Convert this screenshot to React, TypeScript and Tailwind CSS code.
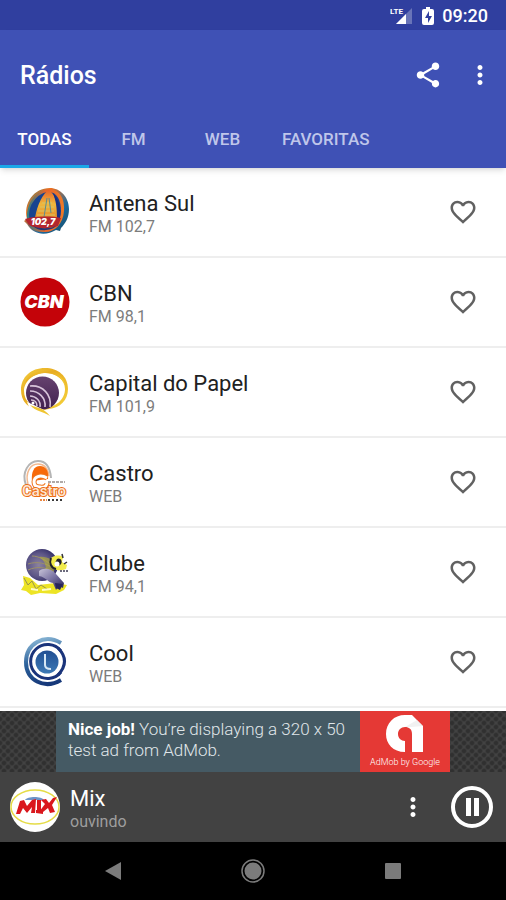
import { useState } from 'react';
import type { ReactNode } from 'react';
import { MdFavorite, MdFavoriteBorder, MdMoreVert, MdShare } from 'react-icons/md';

const tabs = ['TODAS', 'FM', 'WEB', 'FAVORITAS'];

function AntenaLogo() {
  return (
    <svg viewBox="0 0 50 50" className="size-[50px]" aria-hidden="true">
      <defs>
        <linearGradient id="antena-ring" x1="0" y1="0" x2="1" y2="1">
          <stop offset="0" stopColor="#2f8a80" />
          <stop offset="0.3" stopColor="#f0701c" />
          <stop offset="0.65" stopColor="#1c6aa0" />
          <stop offset="1" stopColor="#164a62" />
        </linearGradient>
        <linearGradient id="antena-edge" x1="0" y1="0" x2="1" y2="0">
          <stop offset="0" stopColor="#2a7f86" />
          <stop offset="0.5" stopColor="#e7662b" />
          <stop offset="1" stopColor="#ee7a26" />
        </linearGradient>
        <linearGradient id="antena-sail" x1="0" y1="0" x2="0" y2="1">
          <stop offset="0" stopColor="#e8622a" />
          <stop offset="0.5" stopColor="#f0b73c" />
          <stop offset="1" stopColor="#e58e2a" />
        </linearGradient>
      </defs>
      <path d="M30 1C40 1 49 10 49 22c0 9-4 15-8 19l-1 3-4-1c-10 6-23 5-29-6l-3-3 3-2C3 16 14 1 30 1z" fill="url(#antena-ring)" />
      <path d="M30 2c10 1 15 10 14 22-1 13-9 21-19 21C13 46 7 39 7 30 7 15 17 2 30 2z" fill="url(#antena-edge)" />
      <path d="M29 5c8 0 12 9 12 19S34 41 25 41 9 37 9 28C9 16 19 5 29 5z" fill="#18438f" />
      <path d="M29 3c-6 3-12 15-14 28h24c0-10-3-23-10-28z" fill="url(#antena-sail)" />
      <path d="M33 6c6 6 8 16 7 25h-3c0-10-1-17-4-25z" fill="#172f83" />
      <path d="M22 16h10M20 20h14M18 24h16M17 28h18" stroke="#d8c465" strokeWidth="1" />
      <path d="M27 11l-3 19M29 11l2 15" stroke="#5c8c92" strokeWidth="1" />
      <path d="M5 32c10-3 26-3 36-1l-3 8c-10 3-23 3-29-1z" fill="#b3262e" />
      <path d="M13 39c6 3 17 3 23 0-4 5-18 6-23 0z" fill="#253573" />
      <text x="23" y="38" textAnchor="middle" fontFamily="Inter, sans-serif" fontSize="9" fontWeight="900" fontStyle="italic" fill="#fff">102,7</text>
    </svg>
  );
}

function CbnLogo() {
  return (
    <svg viewBox="0 0 50 50" className="size-[50px]" aria-hidden="true">
      <circle cx="25" cy="25" r="24.5" fill="#c40309" />
      <text x="24" y="31" textAnchor="middle" fontFamily="Inter, sans-serif" fontSize="18" fontWeight="900" fontStyle="italic" fill="#fff">CBN</text>
    </svg>
  );
}

function CapitalLogo() {
  return (
    <svg viewBox="0 0 50 50" className="size-[50px]" aria-hidden="true">
      <defs>
        <linearGradient id="capital-gold" x1="0" y1="0" x2="1" y2="1">
          <stop offset="0" stopColor="#f3cf3f" />
          <stop offset="0.4" stopColor="#e8ac22" />
          <stop offset="1" stopColor="#f6d43d" />
        </linearGradient>
        <linearGradient id="capital-ball" x1="0" y1="0" x2="0" y2="1">
          <stop offset="0" stopColor="#66426f" />
          <stop offset="1" stopColor="#41204f" />
        </linearGradient>
      </defs>
      <path d="M25 1C38 1 48 9 48 22c0 11-8 19-19 20C11 46 1 36 1 23 1 10 11 1 25 1zM26 6C14 6 4 14 4 24c0 10 8 17 18 17 13 0 23-8 23-19C45 13 37 6 26 6z" fill="url(#capital-gold)" fillRule="evenodd" />
      <path d="M22 3c11-1 21 4 23 15C41 10 34 6 25 6 16 6 9 10 5 17 7 8 14 4 22 3z" fill="url(#capital-gold)" />
      <circle cx="22.500" cy="26" r="16.500" fill="url(#capital-ball)" />
      <g fill="none" stroke="#d8c4da" strokeWidth="1.600">
        <path d="M10 19c13-1 22 9 20 21" />
        <path d="M10 24c9 0 16 7 15 16" />
        <path d="M10 29c6 0 11 5 10 11" />
        <path d="M11 33c4 0 6 3 6 6" />
      </g>
      <path d="M7 35l7 3 14 7 2 3-11-3-10-5z" fill="#fff" />
      <path d="M10 38c7 3 13 2 20 11-7-5-14-4-20-11z" fill="#efc532" />
      <circle cx="13" cy="36" r="1.500" fill="#fff" />
    </svg>
  );
}

function CastroLogo() {
  return (
    <svg viewBox="0 0 50 50" className="size-[50px]" aria-hidden="true">
      <path d="M6 28C1 15 9 4 18 4c7 0 12 5 13 17" fill="none" stroke="#b5b5b5" strokeWidth="2" />
      <path d="M8 27C5 16 10 7 18 7c7 0 10 5 11 12" fill="none" stroke="#f3b98f" strokeWidth="1.500" />
      <path d="M12 24c-1-9 2-15 8-15s9 5 8 13z" fill="#f76a0a" />
      <path d="M27 21c-7-4-13-1-13 4 0 3 2 5 6 5 4 1 7-1 7-4" fill="none" stroke="#f0761e" strokeWidth="5" />
      <path d="M27 21c-7-4-13-1-13 4 0 3 2 5 6 5 4 1 7-1 7-4" fill="none" stroke="#fff" strokeWidth="3" />
      <path d="M28 25h17" stroke="#b0aaa8" strokeWidth="2" strokeDasharray="3 1" />
      <text x="24" y="39" textAnchor="middle" fontFamily="Roboto, sans-serif" fontSize="15" fontWeight="500" fill="#fde6d4" stroke="#ec6d14" strokeWidth="2" paintOrder="stroke">Castro</text>
      <path d="M20 43h7" stroke="#e88643" strokeWidth="2" strokeDasharray="2 1" />
      <path d="M28 43h14" stroke="#3a3a3a" strokeWidth="2" strokeDasharray="2 2" />
    </svg>
  );
}

function ClubeLogo() {
  return (
    <svg viewBox="0 0 50 50" className="size-[50px]" aria-hidden="true">
      <defs>
        <radialGradient id="clube-ball" cx="0.4" cy="0.5" r="0.6">
          <stop offset="0" stopColor="#8b82a0" />
          <stop offset="0.6" stopColor="#5e5788" />
          <stop offset="1" stopColor="#302b65" />
        </radialGradient>
        <linearGradient id="clube-arm" x1="0" y1="0" x2="1" y2="1">
          <stop offset="0" stopColor="#c7c3d8" />
          <stop offset="0.5" stopColor="#7770a0" />
          <stop offset="1" stopColor="#242052" />
        </linearGradient>
      </defs>
      <path d="M3 29l7 2 8 7 18-2 11 2-3 5-8 4-16-1-9 2-5-4-5-1 3-5z" fill="#ede425" />
      <path d="M4 31l4 7 4-4 4 8 5-4 6 4" fill="none" stroke="#98944f" strokeWidth="1" />
      <circle cx="22" cy="18" r="16" fill="url(#clube-ball)" />
      <path d="M8 17c9-3 18-1 27 5M8 23c9-4 18-3 26 2M12 9c6 0 15 4 21 11" stroke="#9b9068" strokeWidth="1" fill="none" />
      <path d="M19 10c8-1 15 3 17 8l-3 8-8-1c2-6 0-11-6-15z" fill="#b9b336" opacity="0.6" />
      <path d="M29 15c1-6 9-8 14-5l-1 5 5 3-1 4c-7 3-15 1-17-7z" fill="#f2ec4c" />
      <path d="M31 11c-2 5 0 10 5 11" fill="none" stroke="#22212a" strokeWidth="2" />
      <path d="M37 12c3-2 6 2 4 5s-6 2-6-1z" fill="#22212a" />
      <circle cx="37" cy="17" r="2.500" fill="#fff" />
      <path d="M42 7l1 4M47 15l-3 2" stroke="#343339" strokeWidth="1.500" />
      <path d="M40 24h8" stroke="#3c3a54" strokeWidth="1.500" strokeDasharray="2 1" />
      <path d="M19 24c5-4 13-2 17 3l8 9-1 5-4-2-3 4-3-7c-6-1-7-6-14-7z" fill="url(#clube-arm)" />
      <path d="M35 36l8 1-3 6-4-2z" fill="#28255a" />
      <path d="M11 42l7 1M22 43l9-1" stroke="#fffdc8" strokeWidth="2" />
    </svg>
  );
}

function CoolLogo() {
  return (
    <svg viewBox="0 0 50 50" className="size-[50px]" aria-hidden="true">
      <defs>
        <linearGradient id="cool-outer" x1="0.3" y1="0" x2="0.5" y2="1">
          <stop offset="0" stopColor="#85b2d2" />
          <stop offset="0.5" stopColor="#2b619b" />
          <stop offset="1" stopColor="#17397a" />
        </linearGradient>
        <linearGradient id="cool-center" x1="0" y1="0" x2="0" y2="1">
          <stop offset="0" stopColor="#214f93" />
          <stop offset="1" stopColor="#3d79b5" />
        </linearGradient>
      </defs>
      <path d="M41 6C24-4 6 7 6 25s18 28 35 18" fill="none" stroke="url(#cool-outer)" strokeWidth="4" />
      <path d="M41 14a17 17 0 1 0 0 21" fill="none" stroke="#1b347b" strokeWidth="3" />
      <path d="M38 11q13 13 0 27" fill="none" stroke="#1b347b" strokeWidth="3" />
      <circle cx="27" cy="25" r="11.500" fill="url(#cool-center)" />
      <path d="M25 17v11c0 3 2 4 6 4" fill="none" stroke="#d6e7f5" strokeWidth="2" />
    </svg>
  );
}

function MixLogo() {
  return (
    <svg viewBox="0 0 50 50" className="size-[50px]" aria-hidden="true">
      <circle cx="25" cy="25" r="25" fill="#fff" />
      <ellipse cx="25" cy="25" rx="24" ry="17" fill="none" stroke="#e5dc46" strokeWidth="1.500" />
      <path d="M15 18c2-4 17-4 19 0z" fill="#6d93c9" />
      <path d="M6 32l4-13 4-1 3 6 5-6 4-1-1 14h-4l1-6-5 6-4-5-3 6z" fill="#da171d" />
      <path d="M27 18h4v10l2 1v3l-7-1v-3h1z" fill="#da171d" />
      <path d="M31 18l5-1 3 4 4-5 4-1-5 8 3 7-5 1-2-5-5 4h-4l6-8z" fill="#da171d" />
    </svg>
  );
}

const stations: { name: string; band: string; logo: ReactNode }[] = [
  { name: 'Antena Sul', band: 'FM 102,7', logo: <AntenaLogo /> },
  { name: 'CBN', band: 'FM 98,1', logo: <CbnLogo /> },
  { name: 'Capital do Papel', band: 'FM 101,9', logo: <CapitalLogo /> },
  { name: 'Castro', band: 'WEB', logo: <CastroLogo /> },
  { name: 'Clube', band: 'FM 94,1', logo: <ClubeLogo /> },
  { name: 'Cool', band: 'WEB', logo: <CoolLogo /> },
];

function StatusBar() {
  return (
    <div className="flex h-[30px] items-center justify-end gap-2 bg-[#303f9f] pr-[18px] pt-px text-white">
      <svg viewBox="0 0 24 20" className="h-5 w-6" aria-label="LTE">
        <path d="M22 2v16H6z" fill="#6974b8" />
        <path d="M16 8v10H6z" fill="#fff" />
        <path d="M0 0h13v9H0z" fill="#303f9f" />
        <text x="0" y="8" fontFamily="Roboto, sans-serif" fontSize="8" fontWeight="700" fill="#fff">LTE</text>
      </svg>
      <svg viewBox="0 0 12 20" className="h-5 w-3" aria-label="Bateria">
        <path d="M4 1h4v2h2q2 0 2 2v12q0 2-2 2H2q-2 0-2-2V5q0-2 2-2h2z" fill="#fff" />
        <path d="M7 5l-4 7h3v5l4-7H7z" fill="#303f9f" />
      </svg>
      <span className="text-lg font-medium leading-5">09:20</span>
    </div>
  );
}

export default function App() {
  const [activeTab, setActiveTab] = useState('TODAS');
  const [favorites, setFavorites] = useState<string[]>([]);
  const [playing, setPlaying] = useState(true);

  function toggleFavorite(name: string) {
    setFavorites((prev) => (prev.includes(name) ? prev.filter((n) => n !== name) : [...prev, name]));
  }

  return (
    <div className="flex min-h-screen flex-col bg-white font-['Roboto',sans-serif]">
      <StatusBar />

      <header className="relative bg-[#3f51b5] text-white shadow-md">
        <div className="flex h-20 items-center justify-between pl-5 pr-[11px] pt-[10px]">
          <h1 className="pt-[2px] text-[25px] font-medium leading-8">Rádios</h1>
          <div className="flex items-center gap-[22px]">
            <button aria-label="Compartilhar">
              <MdShare className="size-[30px]" />
            </button>
            <button aria-label="Mais opções">
              <MdMoreVert className="size-[30px]" />
            </button>
          </div>
        </div>
        <div role="tablist" className="flex h-[58px]">
          {tabs.map((tab) => (
            <button
              key={tab}
              role="tab"
              aria-selected={activeTab === tab}
              onClick={() => setActiveTab(tab)}
              className={`min-w-[89px] border-b-[3px] px-[15px] pt-1 text-[17px] font-medium ${
                activeTab === tab ? 'border-[#1ba8e8] text-white' : 'border-transparent text-[#bfc6ea]'
              }`}
            >
              {tab}
            </button>
          ))}
        </div>
      </header>

      <main className="flex-1">
        <ul>
          {stations.map((station) => (
            <li key={station.name} className="flex h-[90px] items-center border-b-2 border-[#eeeeee] pl-5 pr-7">
              {station.logo}
              <div className="ml-[19px] flex-1 pt-[3px]">
                <p className="text-[22px] leading-[26px] text-[#212121]">{station.name}</p>
                <p className="text-base leading-5 text-[#7c7c7c]">{station.band}</p>
              </div>
              <button
                aria-label={`Favoritar ${station.name}`}
                onClick={() => toggleFavorite(station.name)}
                className="text-[#616161]"
              >
                {favorites.includes(station.name) ? (
                  <MdFavorite className="size-[30px]" />
                ) : (
                  <MdFavoriteBorder className="size-[30px]" />
                )}
              </button>
            </li>
          ))}
        </ul>
      </main>

      <footer>
        <div className="flex justify-center bg-[#424242] bg-[radial-gradient(circle,#303030_25%,transparent_55%),radial-gradient(circle,#303030_25%,transparent_55%)] bg-[length:8px_8px] bg-[position:0_0,4px_4px]">
          <a href="#admob" className="flex h-[61px] bg-[#455a64]">
            <p className="w-[304px] pl-3 pt-2 text-[17px] font-light leading-[21px] text-[#e0e7ea]">
              <strong className="font-bold text-white">Nice job!</strong> You’re displaying a 320 x 50 test ad from AdMob.
            </p>
            <div className="flex w-[90px] flex-col items-center justify-end bg-[#e53935] pb-px text-white">
              <svg viewBox="0 0 38 38" className="size-[38px]" aria-hidden="true">
                <path d="M19 37C7 37 0 29 0 19 0 8 8 0 19 0h7l11 11v26H26V19c0-5-3-7-7-7s-7 3-7 7 3 7 7 7z" fill="#fff" />
                <path d="M19 12h7l11-1-6-6z" fill="#e8e8e8" opacity="0.6" />
              </svg>
              <span className="text-[9px] font-light leading-[18px]">AdMob by Google</span>
            </div>
          </a>
        </div>

        <div className="flex h-[70px] items-center bg-[#424242] pl-[10px] pr-[13px] text-white">
          <MixLogo />
          <div className="ml-[10px] flex-1 pt-[3px]">
            <p className="text-[22px] leading-[26px]">Mix</p>
            <p className="text-base leading-5 text-[#9e9e9e]">ouvindo</p>
          </div>
          <button aria-label="Opções do player" className="mr-[23px]">
            <MdMoreVert className="size-[30px]" />
          </button>
          <button aria-label={playing ? 'Pausar' : 'Tocar'} onClick={() => setPlaying(!playing)}>
            <svg viewBox="0 0 42 42" className="size-[42px]">
              <circle cx="21" cy="21" r="19" fill="none" stroke="#fff" strokeWidth="4" />
              {playing ? <path d="M15 12h5v18h-5zM23 12h5v18h-5z" fill="#fff" /> : <path d="M16 12v18l14-9z" fill="#fff" />}
            </svg>
          </button>
        </div>

        <nav className="flex h-[58px] items-center justify-center gap-[116px] bg-black text-[#7b7b7b]">
          <button aria-label="Voltar">
            <svg viewBox="0 0 24 24" className="size-6">
              <path d="M20 3v18L4 12z" fill="currentColor" />
            </svg>
          </button>
          <button aria-label="Início">
            <svg viewBox="0 0 24 24" className="size-6">
              <circle cx="12" cy="12" r="11" fill="none" stroke="currentColor" strokeWidth="1.500" />
              <circle cx="12" cy="12" r="8.500" fill="currentColor" />
            </svg>
          </button>
          <button aria-label="Recentes">
            <svg viewBox="0 0 24 24" className="size-6">
              <rect x="4" y="4" width="16" height="16" rx="1" fill="currentColor" />
            </svg>
          </button>
        </nav>
      </footer>
    </div>
  );
}
